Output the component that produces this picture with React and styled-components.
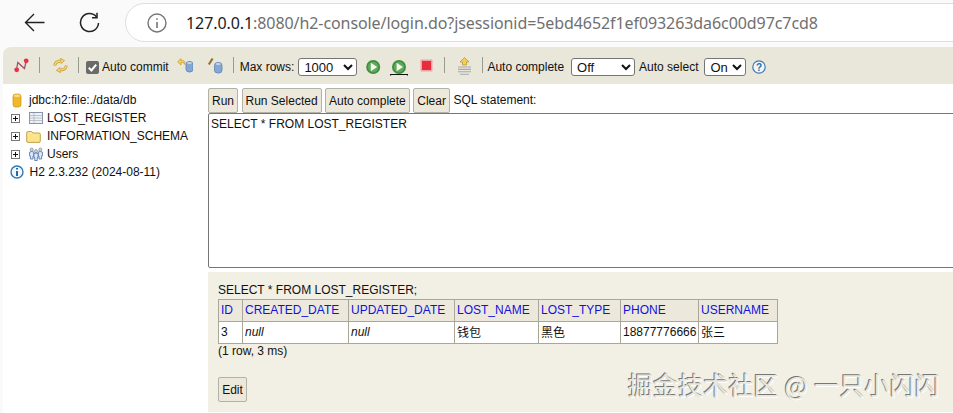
import React from "react";
import styled, { createGlobalStyle } from "styled-components";

const Global = createGlobalStyle`
  html, body { margin: 0; padding: 0; background: #fafafb; }
  body { font-family: "Liberation Sans", Arial, "Noto Sans CJK SC", sans-serif; font-size: 12px; color: #111; }
`;

const Page = styled.div`
  position: relative;
  width: 953px;
  height: 413px;
  overflow: hidden;
  background: #fafafb;
  display: flex;
  flex-direction: column;
`;

const BrowserBar = styled.header`
  height: 47px;
  flex: none;
  display: flex;
  align-items: flex-start;
  padding-top: 3px;
  box-sizing: border-box;
`;
const NavIcon = styled.svg`
  flex: none;
  margin-top: 9px;
  margin-left: ${(p) => p.$ml}px;
`;
const UrlPill = styled.div`
  margin-left: ${(p) => p.$ml}px;
  width: 900px;
  height: 39px;
  flex: none;
  box-sizing: border-box;
  background: #fff;
  border: 1px solid #dedede;
  border-radius: 20px 0 0 20px;
  display: flex;
  align-items: center;
  padding-left: 21px;
`;
const UrlText = styled.div`
  margin-left: 19px;
  font-family: "Noto Sans", "Open Sans", sans-serif;
  font-size: 16px;
  letter-spacing: -0.08px;
  color: #707070;
  white-space: nowrap;
  b { font-weight: 400; color: #1c1c1c; }
`;

const Console = styled.div`
  flex: 1;
  margin-left: 3px;
  display: flex;
  flex-direction: column;
  min-height: 0;
`;
const Toolbar = styled.div`
  height: 37px;
  flex: none;
  box-sizing: border-box;
  padding-top: 3px;
  background: #e9e7d9;
  border-radius: 8px 0 0 0;
  display: flex;
  align-items: center;
  white-space: nowrap;
`;
const Sep = styled.span`
  flex: none;
  width: 1px;
  height: 16px;
  background: #9a9a8e;
  margin-bottom: 4px;
  margin-left: ${(p) => p.$ml}px;
`;
const Tool = styled.svg`
  flex: none;
  margin-left: ${(p) => p.$ml}px;
  margin-bottom: ${(p) => p.$up || 0}px;
`;
const ToolLabel = styled.span`
  flex: none;
  margin-left: ${(p) => p.$ml}px;
  font-size: 12px;
`;
const Check = styled.span`
  flex: none;
  width: 13px;
  height: 13px;
  margin-left: ${(p) => p.$ml}px;
  background: #6a6a6a;
  border-radius: 2px;
  display: flex;
  align-items: center;
  justify-content: center;
`;
const Select = styled.select`
  flex: none;
  box-sizing: border-box;
  margin: 0 0 0 ${(p) => p.$ml}px;
  width: ${(p) => p.$w}px;
  height: 18px;
  padding: 0 0 0 1px;
  background: #fff;
  border: 1px solid #767676;
  border-radius: 3px;
  font-family: "Liberation Sans", Arial, sans-serif;
  font-size: 13px;
  color: #111;
`;

const Body = styled.div`
  flex: 1;
  display: flex;
  min-height: 0;
`;
const Tree = styled.nav`
  width: 205px;
  flex: none;
  background: #fff;
  padding-top: 7px;
  box-sizing: border-box;
  display: flex;
  flex-direction: column;
`;
const TreeRow = styled.div`
  height: 18px;
  display: flex;
  align-items: center;
  padding-left: ${(p) => p.$pl}px;
  white-space: nowrap;
`;
const TreeIcon = styled.svg`
  flex: none;
  margin-left: ${(p) => p.$ml || 0}px;
`;
const TreeLabel = styled.span`
  margin-left: ${(p) => p.$ml}px;
`;

const Main = styled.main`
  flex: 1;
  min-width: 0;
  display: flex;
  flex-direction: column;
  background: #fff;
`;
const Actions = styled.div`
  height: 29px;
  flex: none;
  padding-top: 4px;
  box-sizing: border-box;
  display: flex;
  align-items: flex-start;
  gap: 3.5px;
`;
const Button = styled.button`
  height: 25px;
  margin: 0;
  padding: 0 3px;
  box-sizing: border-box;
  background: #ece9dc;
  border: 1px solid #b3b2a6;
  border-radius: 2px;
  font-family: "Liberation Sans", Arial, sans-serif;
  font-size: 12px;
  color: #111;
  white-space: nowrap;
`;
const StatementLabel = styled.span`
  line-height: 24px;
`;
const Editor = styled.div`
  width: 760px;
  height: 155px;
  flex: none;
  box-sizing: border-box;
  background: #fff;
  border: 1px solid #767676;
  border-radius: 2px;
  padding: 3px 2px;
  font-size: 12px;
  line-height: 15px;
`;
const Results = styled.section`
  margin-top: 4px;
  height: 140px;
  flex: none;
  background: #f2efe4;
  box-sizing: border-box;
  padding: 10px 0 0 10px;
`;
const Query = styled.div`
  height: 17px;
  line-height: 17px;
`;
const ResultTable = styled.table`
  border-collapse: collapse;
  table-layout: fixed;
  width: 559px;
  font-family: "Liberation Sans", Arial, "Noto Sans CJK SC", sans-serif;
  font-size: 12px;
`;
const Th = styled.th`
  height: 22px;
  padding: 0 2px 2px;
  box-sizing: border-box;
  background: #ece9dc;
  border: 1px solid #a9a898;
  font-weight: 400;
  text-align: left;
  color: #1111dd;
  white-space: nowrap;
`;
const Td = styled.td`
  height: 22px;
  padding: 0 2px 2px;
  box-sizing: border-box;
  background: #fff;
  border: 1px solid #a9a898;
  white-space: nowrap;
  font-style: ${(p) => (p.$nil ? "italic" : "normal")};
`;
const Stat = styled.div`
  height: 17px;
  line-height: 17px;
  margin-top: -1px;
`;
const EditButton = styled(Button)`
  display: block;
  margin-top: 17px;
  width: 29px;
  padding: 0;
`;
const Watermark = styled.div`
  position: absolute;
  left: 628px;
  top: 369px;
  font-family: "Noto Sans CJK SC", sans-serif;
  font-size: 24.6px;
  letter-spacing: 0.5px;
  line-height: 30px;
  white-space: nowrap;
  color: #e9e7de;
  text-shadow: -1px -1px 0 #777, 1px 1px 0 #fff, 0 0 1px #666;
`;

const PlayIcon = ({ ml, under }) => (
  <Tool $ml={ml} width={under ? 18 : 15} height="18" viewBox={under ? "0 0 18 18" : "0 0 15 18"}>
    <g transform={under ? "translate(1.8 0)" : ""}>
      <circle cx="7.2" cy="9" r="7" fill="#3f8f3f" />
      <circle cx="7.2" cy="9" r="5.2" fill="#5fa860" />
      <path d="M4.8 4.8 L11.2 9 L4.8 13.2 Z" fill="#f4f6e6" />
    </g>
    {under && <path d="M.5 17.5 V16.5 H17.5 V17.5" fill="none" stroke="#111" strokeWidth="1.2" />}
  </Tool>
);

const SwapArrow = () => (
  <g>
    <path d="M1.6 7.6 Q2.4 3.6 7 3" fill="none" stroke="#c4942c" strokeWidth="2.8" />
    <path d="M1.6 7.6 Q2.4 3.6 7 3" fill="none" stroke="#f8dc68" strokeWidth="1.4" />
    <path d="M7.5 .4 L11.6 2.6 L8 5.6 Z" fill="#f8dc68" stroke="#c4942c" strokeWidth=".7" />
  </g>
);

const columns = [
  ["ID", 24], ["CREATED_DATE", 106], ["UPDATED_DATE", 106], ["LOST_NAME", 84],
  ["LOST_TYPE", 82], ["PHONE", 78], ["USERNAME", 79],
];
const row = [["3"], ["null", true], ["null", true], ["钱包"], ["黑色"], ["18877776666"], ["张三"]];

function PlusBox() {
  return (
    <TreeIcon width="9" height="9" viewBox="0 0 9 9">
      <rect x=".5" y=".5" width="8" height="8" fill="#fff" stroke="#777" />
      <path d="M2 4.5 H7 M4.5 2 V7" stroke="#111" />
    </TreeIcon>
  );
}

const Person = ({ x, y }) => (
  <g transform={`translate(${x} ${y})`}>
    <circle cx="2.5" cy="1.6" r="1.5" fill="#e4d8c4" stroke="#56709c" strokeWidth=".6" />
    <path d="M.4 4 Q2.5 3 4.6 4 V8 H3.8 V11 H1.2 V8 H.4 Z" fill="#dfe8f4" stroke="#456fa8" strokeWidth=".8" />
  </g>
);

export default function App() {
  return (
    <Page>
      <Global />
      <BrowserBar>
        <NavIcon $ml={24} width="21" height="20" viewBox="0 0 21 20">
          <path d="M20.5 10.5 H1.5 M10 2 L1.5 10.5 L10 19" fill="none" stroke="#222" strokeWidth="1.4" />
        </NavIcon>
        <NavIcon $ml={34} width="21" height="21" viewBox="0 0 21 21">
          <path d="M17.6 5 A9 9 0 1 0 19.5 11" fill="none" stroke="#222" strokeWidth="1.5" />
          <path d="M18 .8 V5.8 H13" fill="none" stroke="#222" strokeWidth="1.5" />
        </NavIcon>
        <UrlPill $ml={25}>
          <svg width="20" height="20" viewBox="0 0 20 20" style={{ flex: "none" }}>
            <circle cx="10" cy="10" r="9" fill="none" stroke="#757575" strokeWidth="1.4" />
            <path d="M10 9 V15 M10 5.2 V6.8" stroke="#757575" strokeWidth="1.6" />
          </svg>
          <UrlText>
            <b>127.0.0.1</b>:8080/h2-console/login.do?jsessionid=5ebd4652f1ef093263da6c00d97c7cd8
          </UrlText>
        </UrlPill>
      </BrowserBar>

      <Console>
        <Toolbar>
          <Tool $ml={11} $up={4} width="15" height="15" viewBox="0 0 15 15">
            <path d="M2.5 11.5 L3.8 4.5 L10.5 10.5 L12.2 3" fill="none" stroke="#a04a68" strokeWidth="1.2" />
            <circle cx="2.7" cy="11.8" r="2.4" fill="#e5324a" />
            <circle cx="12.2" cy="2.8" r="2.4" fill="#e5324a" />
          </Tool>
          <Sep $ml={10} />
          <Tool $ml={13} $up={4} width="15" height="15" viewBox="0 0 15 15">
            <SwapArrow />
            <g transform="rotate(180 7.5 7.5)"><SwapArrow /></g>
          </Tool>
          <Sep $ml={10} />
          <Check $ml={7}>
            <svg width="11" height="11" viewBox="0 0 11 11">
              <path d="M1.8 5.8 L4.4 8.4 L9.2 2.6" fill="none" stroke="#fff" strokeWidth="2" />
            </svg>
          </Check>
          <ToolLabel $ml={3}>Auto commit</ToolLabel>
          <Tool $ml={8} $up={3} width="16" height="16" viewBox="0 0 16 16">
            <path d="M.6 3.8 L4 .6 V2.4 H5.5 Q8 2.4 8 6.6 Q7 4.6 5.5 4.6 H4 V7 Z" fill="#f3cf5c" stroke="#b8902a" strokeWidth=".6" />
            <rect x="9" y="3.5" width="7" height="10.5" rx="3" fill="#84a8d6" stroke="#5f82b2" strokeWidth=".8" />
            <ellipse cx="12.5" cy="5" rx="2.4" ry="1" fill="#c6d8ec" />
          </Tool>
          <Tool $ml={15} $up={3} width="16" height="18" viewBox="0 0 16 18">
            <path d="M.8 7.5 L4.6 1.5" stroke="#8f7238" strokeWidth="2.2" />
            <rect x="6.5" y="5.5" width="7.5" height="10.5" rx="3" fill="#84a8d6" stroke="#5f82b2" strokeWidth=".8" />
            <ellipse cx="10.2" cy="7" rx="2.6" ry="1" fill="#c6d8ec" />
          </Tool>
          <Sep $ml={9} />
          <ToolLabel $ml={6}>Max rows:</ToolLabel>
          <Select $ml={4} $w={59} defaultValue="1000">
            <option>1000</option>
          </Select>
          <PlayIcon ml={9} />
          <PlayIcon ml={9} under />
          <Tool $ml={12} $up={3} width="13" height="13" viewBox="0 0 13 13">
            <rect x=".5" y=".5" width="12" height="12" rx="1" fill="#f2a0a8" />
            <rect x="2" y="2" width="9" height="9" fill="#e52d3c" />
          </Tool>
          <Sep $ml={11} />
          <Tool $ml={12} $up={3} width="15" height="18" viewBox="0 0 15 18">
            <path d="M7.5 .6 L12 5 H9.5 V8 H5.5 V5 H3 Z" fill="#f5d050" stroke="#b8902a" strokeWidth=".7" />
            <path d="M1 10 H14 M1 12.4 H14 M1 14.8 H14 M3 17.2 H12" stroke="#a8a8b8" strokeWidth="1.1" />
          </Tool>
          <Sep $ml={10} />
          <ToolLabel $ml={4}>Auto complete</ToolLabel>
          <Select $ml={7} $w={64} defaultValue="Off">
            <option>Off</option>
          </Select>
          <ToolLabel $ml={4}>Auto select</ToolLabel>
          <Select $ml={6} $w={42} defaultValue="On">
            <option>On</option>
          </Select>
          <Tool $ml={6} width="14" height="14" viewBox="0 0 14 14">
            <circle cx="7" cy="7" r="6.2" fill="#f3f6fa" stroke="#3d7ab5" strokeWidth="1.2" />
            <text x="7" y="10.6" textAnchor="middle" fontSize="10" fontWeight="700" fontFamily="Liberation Sans" fill="#2a6aa8">?</text>
          </Tool>
        </Toolbar>

        <Body>
          <Tree>
            <TreeRow $pl={9}>
              <TreeIcon width="10" height="15" viewBox="0 0 10 15">
                <rect x="1" y="1" width="8" height="13" rx="2.5" fill="#f0b82a" stroke="#c8921a" strokeWidth=".7" />
                <ellipse cx="5" cy="2.8" rx="3.2" ry="1.2" fill="#f8dc80" />
              </TreeIcon>
              <TreeLabel $ml={7}>jdbc:h2:file:./data/db</TreeLabel>
            </TreeRow>
            <TreeRow $pl={8}>
              <PlusBox />
              <TreeIcon $ml={9} width="14" height="12" viewBox="0 0 14 12">
                <rect x=".5" y=".5" width="13" height="11" fill="#eef0f4" stroke="#8a94a8" />
                <path d="M1 3.5 H13 M1 6 H13 M1 8.5 H13 M5 1 V11" stroke="#aeb6c4" strokeWidth=".8" />
              </TreeIcon>
              <TreeLabel $ml={4}>LOST_REGISTER</TreeLabel>
            </TreeRow>
            <TreeRow $pl={8}>
              <PlusBox />
              <TreeIcon $ml={6} width="15" height="13" viewBox="0 0 15 13">
                <path d="M.7 3 Q.7 1.5 2 1.5 H5.5 L7 3 H13 Q14.3 3 14.3 4.2 V11 Q14.3 12.4 13 12.4 H2 Q.7 12.4 .7 11 Z" fill="#fbe48e" stroke="#c09a3c" strokeWidth=".9" />
              </TreeIcon>
              <TreeLabel $ml={6}>INFORMATION_SCHEMA</TreeLabel>
            </TreeRow>
            <TreeRow $pl={8}>
              <PlusBox />
              <TreeIcon $ml={9} width="14" height="14" viewBox="0 0 14 14">
                <Person x={.2} y={1} />
                <Person x={8.8} y={1} />
                <Person x={4.5} y={2.5} />
              </TreeIcon>
              <TreeLabel $ml={4}>Users</TreeLabel>
            </TreeRow>
            <TreeRow $pl={7}>
              <TreeIcon width="14" height="14" viewBox="0 0 14 14">
                <circle cx="7" cy="7" r="6" fill="#f2f7fb" stroke="#2d7ab8" strokeWidth="1.4" />
                <path d="M7 6 V11 M7 3 V4.6" stroke="#1f6aa8" strokeWidth="2" />
              </TreeIcon>
              <TreeLabel $ml={5.5}>H2 2.3.232 (2024-08-11)</TreeLabel>
            </TreeRow>
          </Tree>

          <Main>
            <Actions>
              <Button>Run</Button>
              <Button>Run Selected</Button>
              <Button>Auto complete</Button>
              <Button>Clear</Button>
              <StatementLabel>SQL statement:</StatementLabel>
            </Actions>
            <Editor>SELECT * FROM LOST_REGISTER</Editor>
            <Results>
              <Query>SELECT * FROM LOST_REGISTER;</Query>
              <ResultTable>
                <colgroup>
                  {columns.map(([name, w]) => (
                    <col key={name} width={w} />
                  ))}
                </colgroup>
                <thead>
                  <tr>
                    {columns.map(([name]) => (
                      <Th key={name}>{name}</Th>
                    ))}
                  </tr>
                </thead>
                <tbody>
                  <tr>
                    {row.map(([v, nil], i) => (
                      <Td key={i} $nil={nil}>{v}</Td>
                    ))}
                  </tr>
                </tbody>
              </ResultTable>
              <Stat>(1 row, 3 ms)</Stat>
              <EditButton>Edit</EditButton>
            </Results>
          </Main>
        </Body>
      </Console>
      <Watermark>掘金技术社区 @ 一只小闪闪</Watermark>
    </Page>
  );
}
